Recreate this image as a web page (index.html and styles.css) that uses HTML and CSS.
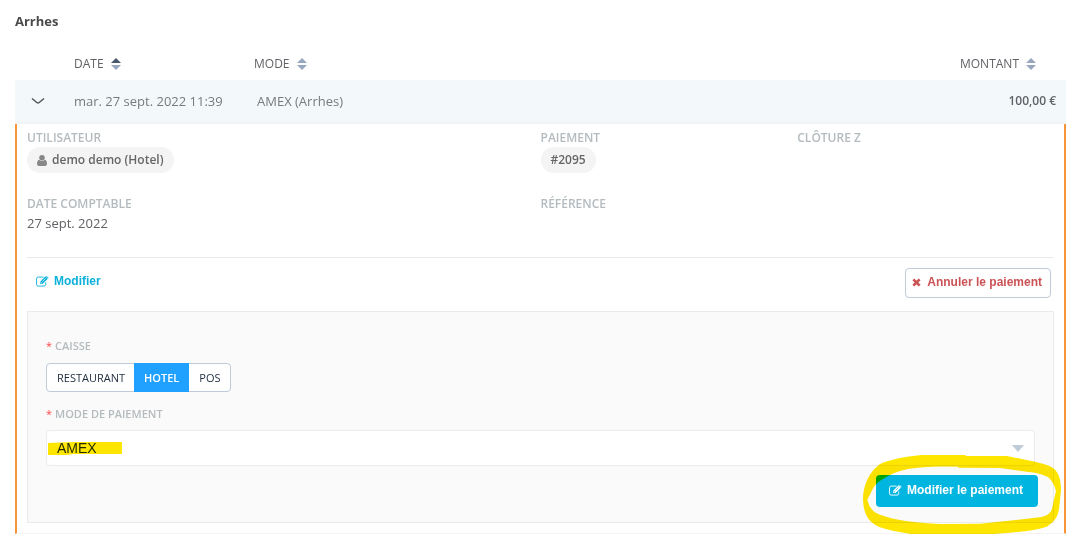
FILE: index.html
```html
<!DOCTYPE html>
<html lang="fr">
<head>
<meta charset="utf-8">
<title>Arrhes</title>
<link rel="stylesheet" href="styles.css">
</head>
<body>
<svg class="defs" aria-hidden="true">
  <symbol id="edit" viewBox="0 0 14 12">
    <path d="M10.500 7v2.200a1.800 1.800 0 0 1-1.800 1.800H2.300A1.800 1.800 0 0 1 .5 9.200V3A1.800 1.800 0 0 1 2.300 1.200h5.900" fill="none" stroke="currentColor"/>
    <path d="M4.500 8.700V6.200L10.300.4l2.500 2.500L7 8.700z" fill="currentColor"/>
    <path d="M5.500 6.700v1h1M7 6l3.300-3.300" fill="none" stroke="var(--cut)" stroke-width=".7"/>
    <path d="M10.800 0l.5-.3 2.300 2.200-.5.700z" fill="currentColor"/>
  </symbol>
  <symbol id="sort" viewBox="0 0 10 12">
    <path class="up" d="M5 0l5 5H0z"/>
    <path class="down" d="M0 7h10l-5 5z"/>
  </symbol>
</svg>
<main class="page">
  <h1 class="title">Arrhes</h1>
  <table class="payments">
    <thead>
      <tr>
        <th class="col-toggle"></th>
        <th class="col-date" aria-sort="ascending"><button class="sort asc" type="button">DATE <svg><use href="#sort"/></svg></button></th>
        <th class="col-mode"><button class="sort" type="button">MODE <svg><use href="#sort"/></svg></button></th>
        <th class="col-amount"><button class="sort" type="button">MONTANT <svg><use href="#sort"/></svg></button></th>
      </tr>
    </thead>
    <tbody>
      <tr class="row">
        <td class="toggle-cell"><button class="toggle" type="button" aria-label="Détails" aria-expanded="true"><svg viewBox="0 0 14 8"><path d="M1 1.500l4.800 4q1.200 1 2.400 0l4.800-4"/></svg></button></td>
        <td>mar. 27 sept. 2022 11:39</td>
        <td class="mode">AMEX (Arrhes)</td>
        <td class="amount">100,00 €</td>
      </tr>
      <tr>
        <td class="detail" colspan="4">
          <dl class="facts">
            <div class="fact"><dt>UTILISATEUR</dt><dd class="pill"><svg class="user" viewBox="0 0 10 11"><circle cx="5" cy="2.800" r="2.800"/><path d="M2 4.800q3 2.400 6 0Q10 5.500 10 9q0 2-2 2H2Q0 11 0 9q0-3.500 2-4.200z"/></svg>demo demo (Hotel)</dd></div>
            <div class="fact"><dt>PAIEMENT</dt><dd class="pill">#2095</dd></div>
            <div class="fact"><dt>CLÔTURE Z</dt></div>
            <div class="fact"><dt>DATE COMPTABLE</dt><dd>27 sept. 2022</dd></div>
            <div class="fact"><dt>RÉFÉRENCE</dt></div>
          </dl>
          <div class="actions">
            <button class="link-button" type="button"><svg class="edit"><use href="#edit"/></svg>Modifier</button>
            <button class="cancel" type="button"><svg class="cross" viewBox="0 0 10 10"><path d="M1.500 1.500l7 7M8.500 1.500l-7 7"/></svg>Annuler le paiement</button>
          </div>
          <form class="panel">
            <fieldset class="field">
              <legend class="label"><span class="star">*</span>CAISSE</legend>
              <div class="segments">
                <label class="segment"><input type="radio" name="till"><span>RESTAURANT</span></label>
                <label class="segment"><input type="radio" name="till" checked><span>HOTEL</span></label>
                <label class="segment"><input type="radio" name="till"><span>POS</span></label>
              </div>
            </fieldset>
            <label class="label" for="method"><span class="star">*</span>MODE DE PAIEMENT</label>
            <div class="select-wrap">
              <select id="method" class="select"><option>AMEX</option></select>
              <svg class="caret" viewBox="0 0 12 7"><path d="M0 0h12L6 7z"/></svg>
              <svg class="marker" viewBox="0 0 74 13"><path d="M0 1l26-1h48v12H25l-6 1H0z"/></svg>
            </div>
            <div class="submit-line">
              <div class="submit-wrap">
                <button class="submit" type="button"><svg class="edit"><use href="#edit"/></svg>Modifier le paiement</button>
                <svg class="ring" viewBox="60 96 606 258"><path fill-rule="evenodd" d="M69 238C69 195 88 155 120 132C150 118 190 111 245 105H375L380 108H500L560 120C610 130 641 138 652 158Q663 175 663 212L657 268Q652 303 620 320Q580 334 500 339L390 347L240 345Q165 338 120 322C82 306 71 280 69 238zM82 240C94 216 100 194 124 180Q158 156 205 147Q255 137 355 140V143L480 144L560 155Q615 160 630 177Q642 190 648 213Q641 240 636 267Q630 286 605 291L520 301L420 311L300 312Q220 308 180 300Q130 290 107 278Q88 266 82 240z"/></svg>
              </div>
            </div>
          </form>
        </td>
      </tr>
    </tbody>
  </table>
</main>
</body>
</html>
```
FILE: styles.css
```css
* { box-sizing: border-box; }
body {
  margin: 0;
  background: #fff;
  color: #606266;
  font: 13px/20px "Open Sans", "Noto Sans", sans-serif;
}
button { font: inherit; color: inherit; background: none; border: 0; padding: 0; cursor: pointer; }
svg { flex: none; }
.defs { position: absolute; width: 0; height: 0; }
.page { padding: 11px 13px 0 15px; }
.title { margin: 0 0 16px; font-size: 13px; line-height: 20px; font-weight: 700; color: #4a4a4a; }

.payments { width: 100%; border-collapse: separate; border-spacing: 0; table-layout: fixed; }
.payments th { height: 33px; padding: 0; text-align: left; font-size: 12px; font-weight: 400; color: #606266; }
.col-toggle { width: 59px; }
.col-date { width: 180px; }
.payments .col-amount { text-align: right; padding-right: 30px; }
.sort { display: inline-flex; align-items: center; gap: 7px; }
.sort svg { width: 10px; height: 12px; fill: #97a8be; }
.asc svg { --up: #48576a; }
.up { fill: var(--up, #97a8be); }
.row td { height: 44px; padding: 0; background: #f3f8fb; border-bottom: 2px solid #f1f4f5; color: #7a7a7a; }
.row .mode { padding-left: 3px; }
.row .amount { padding-right: 10px; text-align: right; font-size: 12px; font-weight: 600; color: #606266; }
.toggle { display: flex; margin-left: 16px; }
.toggle svg { width: 14px; height: 8px; fill: none; stroke: #555; stroke-width: 1.5; }

.detail { padding: 5px 10px 10px; border: solid #f7953b; border-width: 0 2px; border-bottom: 1px solid #f4f4f4; }
.facts { display: grid; grid-template-columns: 2fr 1fr 1fr; grid-template-rows: 66px 62px; margin: 0; border-bottom: 1px solid #ebebeb; }
.fact dt { font-size: 12px; line-height: 18px; font-weight: 600; color: #b4bbbf; }
.fact dd { margin: 0; }
.fact .pill { display: inline-flex; align-items: center; height: 26px; padding: 0 10px; border-radius: 13px; background: #f4f4f4; font-size: 12px; font-weight: 600; color: #666; }
.user { width: 10px; height: 11px; margin-right: 5px; fill: #888; }

.actions { display: flex; justify-content: space-between; align-items: flex-start; padding: 10px 3px 13px 9px; font: bold 12px/16px "Liberation Sans", Arial, sans-serif; }
.link-button, .cancel, .submit { display: flex; align-items: center; }
.link-button { height: 26px; gap: 5px; color: #0cb1dc; --cut: #fff; }
.edit { width: 13px; height: 11px; overflow: visible; }
.cancel { height: 30px; gap: 6px; padding: 0 8px 2px 6px; border: 1px solid #bfcbd9; border-radius: 4px; color: #cb5356; }
.cross { width: 9px; height: 9px; stroke: currentColor; stroke-width: 3; }

.panel { padding: 24px 18px 15px; border: 1px solid #ebebeb; background: #fafafa; }
.field { margin: 0 0 12px; padding: 0; border: 0; }
.label { display: flex; gap: 3px; margin-bottom: 6px; padding: 0; font-size: 11px; line-height: 20px; font-weight: 600; color: #b4bbbf; }
.star { color: #ff4949; font-weight: 400; }
.segments { display: inline-flex; height: 29px; margin-top: 1px; border: 1px solid #bfcbd9; border-radius: 4px; background: #fff; vertical-align: top; }
.segment { position: relative; display: flex; font-size: 11px; color: #1f2d3d; cursor: pointer; }
.segment input { position: absolute; inset: 0; width: 100%; height: 100%; margin: 0; opacity: 0; }
.segment span { display: flex; align-items: center; padding: 0 9px 0 10px; }
.segment input:checked + span { margin: -1px 0; padding: 0 10px; background: #20a0ff; color: #fff; font-weight: 600; }
.select-wrap { position: relative; }
.select { display: block; width: 100%; height: 36px; padding: 0 10px; appearance: none; border: 1px solid #ebebeb; border-radius: 4px; background: #fff; color: #1f2d3d; font: 14px "Liberation Sans", Arial, sans-serif; }
.caret { position: absolute; right: 11px; top: 15px; width: 12px; height: 7px; fill: #bfcbd9; pointer-events: none; }
.marker { position: absolute; left: 2px; top: 12px; width: 74px; height: 13px; }
.marker, .ring { fill: #ffe600; mix-blend-mode: multiply; pointer-events: none; }
.submit-line { display: flex; justify-content: flex-end; margin-right: -3px; padding-top: 9px; }
.submit-wrap { position: relative; }
.submit { height: 32px; gap: 5px; padding: 0 15px 2px 13px; border-radius: 4px; background: #00b5df; color: #fff; --cut: #00b5df; font: bold 12px/16px "Liberation Sans", Arial, sans-serif; }
.ring { position: absolute; left: -16px; top: -23px; width: 202px; height: 86px; }
```
